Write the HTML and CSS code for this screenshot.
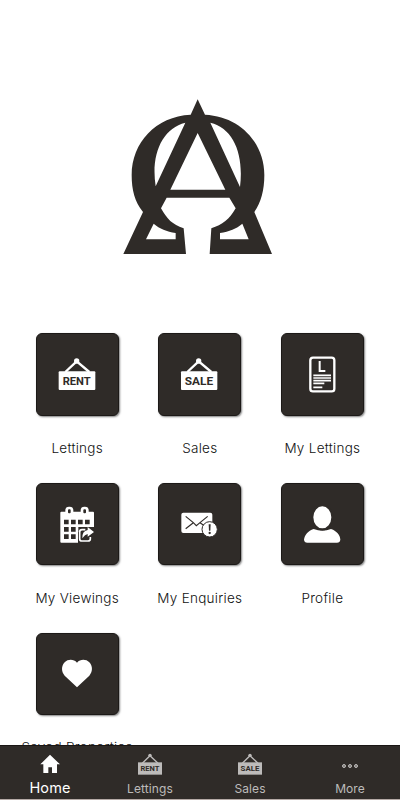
FILE: index.html
```html
<!DOCTYPE html>
<html lang="en">
<head>
  <meta charset="UTF-8">
  <meta name="viewport" content="width=device-width, initial-scale=1">
  <title>Home</title>
  <link rel="stylesheet" href="styles.css">
</head>
<body>
  <main class="screen">
    <div class="logo">
      <svg viewBox="0 0 540 540" width="180" height="180">
        <g fill="#2f2b28" fill-rule="evenodd">
          <path d="M263 28 L285 74 C390 79 463 158 463 255 C463 300 453 337 433 366 L486 492 H299 L304 415 C337 405 359 387 377 355 L358 323 H170 L153 355 C171 387 187 404 221 415 L228 492 H40 L99 366 C74 335 65 300 65 255 C65 158 137 79 242 74 Z
            M226 98 C157 115 122 193 137 289 Z
            M301 98 C371 115 402 193 390 291 Z
            M263 129 L181 299 H346 Z
            M131 401 L108 448 H197 V429 C170 425 149 416 131 401 Z
            M397 401 L416 448 H330 V429 C358 425 379 416 397 401 Z"/>
        </g>
      </svg>
    </div>

    <div class="menu">
      <a class="item">
        <span class="tile">
          <svg viewBox="0 0 249 249">
            <path d="M88 117 L122 85 L160 117" fill="none" stroke="#fff" stroke-width="7"/>
            <circle cx="122" cy="84" r="8" fill="#fff"/>
            <rect x="68" y="115" width="110" height="56" rx="3" fill="#fff"/>
            <text class="sign" x="122" y="155" textLength="84" lengthAdjust="spacingAndGlyphs">RENT</text>
          </svg>
        </span>
        <span class="label">Lettings</span>
      </a>
      <a class="item">
        <span class="tile">
          <svg viewBox="0 0 249 249">
            <path d="M88 117 L122 85 L160 117" fill="none" stroke="#fff" stroke-width="7"/>
            <circle cx="122" cy="84" r="8" fill="#fff"/>
            <rect x="69" y="115" width="109" height="56" rx="3" fill="#fff"/>
            <text class="sign" x="123" y="155" textLength="85" lengthAdjust="spacingAndGlyphs">SALE</text>
          </svg>
        </span>
        <span class="label">Sales</span>
      </a>
      <a class="item">
        <span class="tile">
          <svg viewBox="0 0 249 249" fill="none" stroke="#fff">
            <rect x="88" y="74" width="72" height="101" rx="8" stroke-width="7"/>
            <path d="M116 84 V114 H133" stroke-width="6"/>
            <path d="M97 127 H150 M97 135 H150 M97 143 H150 M97 151 H130 M97 163 H124" stroke-width="5"/>
          </svg>
        </span>
        <span class="label">My Lettings</span>
      </a>
      <a class="item">
        <span class="tile">
          <svg viewBox="0 0 249 249">
            <path d="M76 86 H171 Q174 86 174 89 V139 H150 L126 148 V179 H76 Q73 179 73 176 V89 Q73 86 76 86 Z" fill="#fff"/>
            <g fill="#2f2b28" stroke="#fff" stroke-width="8">
              <rect x="92" y="75" width="16" height="20" rx="7"/>
              <rect x="138" y="75" width="16" height="20" rx="7"/>
            </g>
            <path d="M84 110h14v14h-14z M105 110h14v14h-14z M126 110h14v14h-14z M147 110h14v14h-14z M84 132h14v14h-14z M105 132h14v14h-14z M84 154h14v14h-14z M105 154h14v14h-14z" fill="#2f2b28"/>
            <rect x="127" y="132" width="50" height="50" fill="#2f2b28"/>
            <path d="M148 140 H138 Q131 140 131 147 V167 Q131 174 138 174 H156 Q163 174 163 168 V162" fill="none" stroke="#fff" stroke-width="5"/>
            <path d="M155 132 L174 147 L155 161 V153 Q147 154 139 166 Q138 144 155 141 Z" fill="#fff"/>
          </svg>
        </span>
        <span class="label">My Viewings</span>
      </a>
      <a class="item">
        <span class="tile">
          <svg viewBox="0 0 249 249">
            <rect x="70" y="89" width="93" height="61" rx="6" fill="#fff"/>
            <path d="M83 100 L106 119 L115 128 L126 119 L149 100 M83 137 L106 119 M126 119 L139 128" fill="none" stroke="#2f2b28" stroke-width="3.5"/>
            <circle cx="155" cy="139" r="23" fill="#fff" stroke="#2f2b28" stroke-width="3"/>
            <path d="M152 124 H158 L157 143 H153 Z" fill="#2f2b28"/>
            <circle cx="155" cy="150" r="3.5" fill="#2f2b28"/>
          </svg>
        </span>
        <span class="label">My Enquiries</span>
      </a>
      <a class="item">
        <span class="tile">
          <svg viewBox="0 0 249 249" fill="#fff">
            <path d="M98 138 Q124 149 150 138 C168 144 178 158 178 170 Q177 179 168 179 H79 Q70 179 69 170 C71 156 81 143 98 138 Z"/>
            <ellipse cx="124" cy="103" rx="30" ry="36" stroke="#2f2b28" stroke-width="6"/>
          </svg>
        </span>
        <span class="label">Profile</span>
      </a>
      <a class="item">
        <span class="tile">
          <svg viewBox="0 0 249 249" fill="#fff">
            <path d="M123 89 C133 78 150 78 160 88 C171 100 170 117 160 128 L123 163 L86 128 C76 117 75 100 86 88 C96 78 113 78 123 89 Z"/>
          </svg>
        </span>
        <span class="label">Saved Properties</span>
      </a>
    </div>
  </main>

  <nav class="tabbar">
    <a class="tab active">
      <svg viewBox="0 0 72 66" width="24" height="22">
        <path d="M36 8 L66 37 H57 V63 H42 V46 H31 V63 H16 V37 H7 Z" fill="#fff"/>
      </svg>
      <span>Home</span>
    </a>
    <a class="tab">
      <svg viewBox="0 0 72 66" width="24" height="22">
        <path d="M13 31 L36 8 L60 31" fill="none" stroke="#bdbbba" stroke-width="4"/>
        <circle cx="36" cy="7" r="5" fill="#bdbbba"/>
        <rect x="0" y="28" width="72" height="37" fill="#bdbbba"/>
        <text class="sign small" x="36" y="55" textLength="57" lengthAdjust="spacingAndGlyphs">RENT</text>
      </svg>
      <span>Lettings</span>
    </a>
    <a class="tab">
      <svg viewBox="0 0 72 66" width="24" height="22">
        <path d="M13 31 L36 8 L60 31" fill="none" stroke="#bdbbba" stroke-width="4"/>
        <circle cx="36" cy="7" r="5" fill="#bdbbba"/>
        <rect x="0" y="28" width="72" height="37" fill="#bdbbba"/>
        <text class="sign small" x="36" y="55" textLength="57" lengthAdjust="spacingAndGlyphs">SALE</text>
      </svg>
      <span>Sales</span>
    </a>
    <a class="tab">
      <svg viewBox="0 0 72 66" width="24" height="22">
        <g fill="#77736f" stroke="#bdbbba" stroke-width="3">
          <circle cx="18" cy="39" r="4.5"/>
          <circle cx="36" cy="39" r="4.5"/>
          <circle cx="54" cy="39" r="4.5"/>
        </g>
      </svg>
      <span>More</span>
    </a>
  </nav>
</body>
</html>
```

FILE: styles.css
```css
* {
  margin: 0;
  padding: 0;
  box-sizing: border-box;
}

body {
  display: flex;
  flex-direction: column;
  height: 800px;
  overflow: hidden;
  background: #fff;
  font-family: Inter, "Liberation Sans", sans-serif;
}

svg {
  display: block;
}

.screen {
  height: 745px;
  overflow: hidden;
}

.logo {
  display: flex;
  justify-content: center;
  padding-top: 90px;
  height: 333.4px;
}

.menu {
  display: grid;
  grid-template-columns: repeat(3, 122.6px);
  grid-auto-rows: 149.6px;
  justify-content: center;
  margin-right: 0.4px;
}

.item {
  display: flex;
  flex-direction: column;
  align-items: center;
}

.tile {
  width: 83px;
  height: 82.5px;
  border: 1px solid #1c1917;
  border-radius: 6px;
  background: #2f2b28;
  box-shadow: 1px 1px 2px rgba(0, 0, 0, 0.5);
}

.tile svg {
  width: 83px;
  height: 83px;
  margin: -1px;
}

.sign {
  font: bold 34px Roboto, "Liberation Sans", sans-serif;
  text-anchor: middle;
  fill: #2f2b28;
  stroke: none;
}

.small {
  font-size: 23px;
}

.label {
  margin-top: 23.4px;
  line-height: 18px;
  font-size: 13.5px;
  font-weight: 300;
  letter-spacing: 0.28px;
  color: #111;
  white-space: nowrap;
}

.tabbar {
  display: grid;
  grid-template-columns: repeat(4, 1fr);
  height: 55px;
  background: #2f2b28;
  border-top: 1px solid #1a1614;
  border-bottom: 1px solid #b5aaa6;
}

.tab {
  display: flex;
  flex-direction: column;
  align-items: center;
  padding-top: 7px;
  font-size: 12px;
  line-height: 16px;
  letter-spacing: 0.1px;
  color: #bdbbba;
}

.tab span {
  margin-top: 6px;
}

.active {
  padding-top: 6px;
  font-size: 14.5px;
  color: #fff;
}
```
